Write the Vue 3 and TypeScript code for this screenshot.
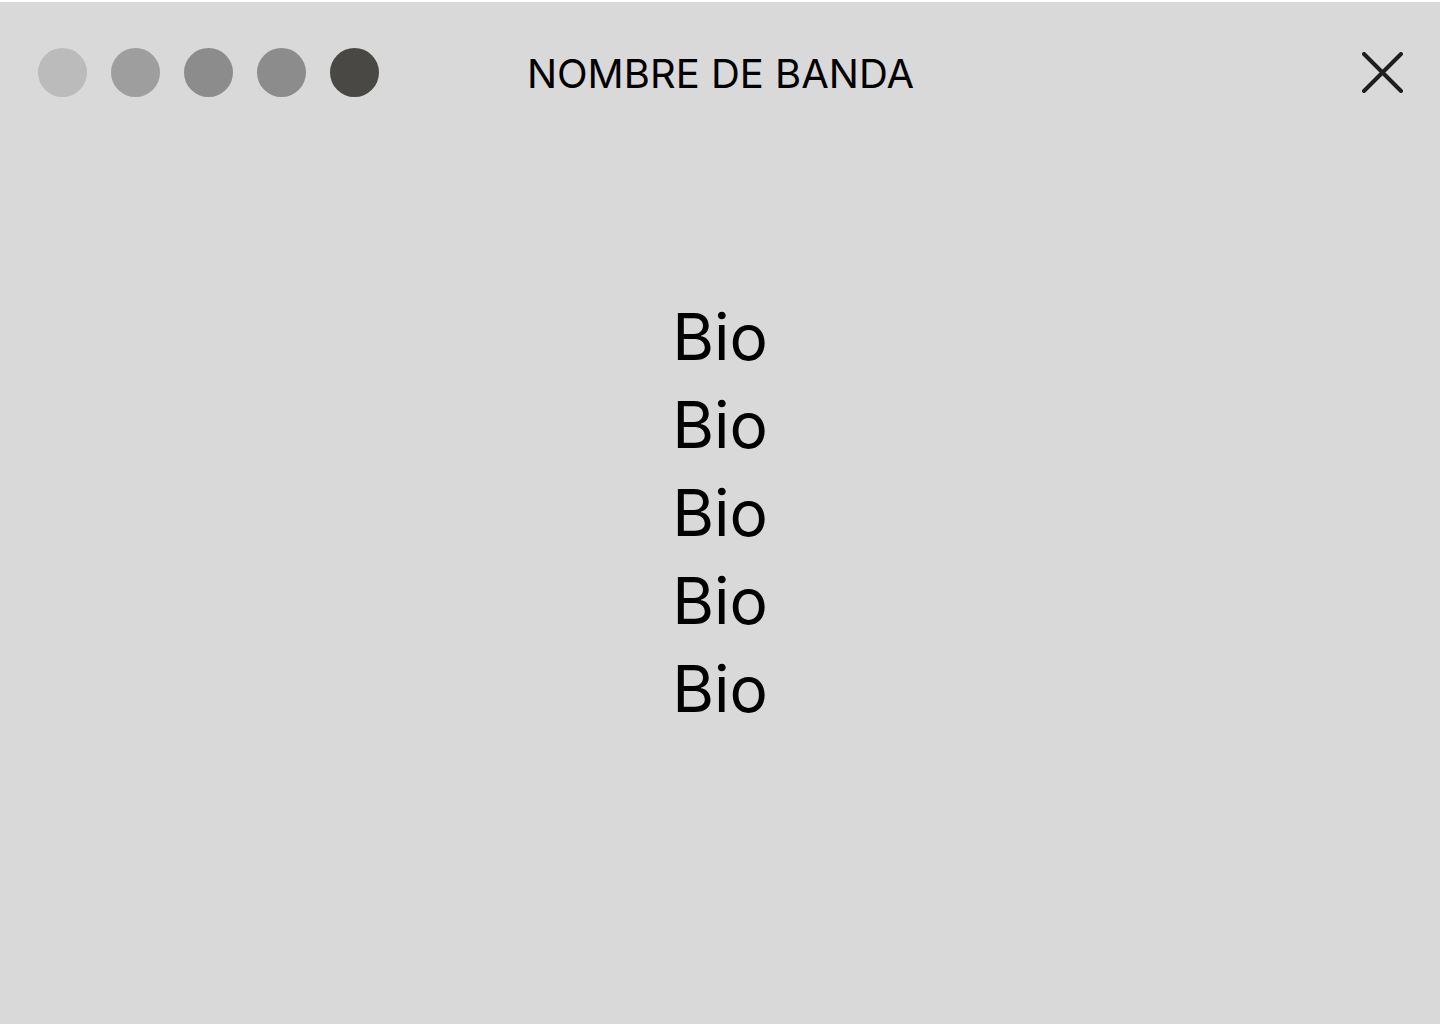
<script setup lang="ts">
interface Swatch {
  label: string
  tone: string
}

const swatches: Swatch[] = [
  { label: 'Sección 1', tone: 'tone-1' },
  { label: 'Sección 2', tone: 'tone-2' },
  { label: 'Sección 3', tone: 'tone-3' },
  { label: 'Sección 4', tone: 'tone-3' },
  { label: 'Sección 5', tone: 'tone-4' },
]

const bio: string[] = ['Bio', 'Bio', 'Bio', 'Bio', 'Bio']
</script>

<template>
  <div class="page">
    <header class="bar">
      <nav class="dots">
        <button
          v-for="swatch in swatches"
          :key="swatch.label"
          type="button"
          class="dot"
          :class="swatch.tone"
          :aria-label="swatch.label"
        ></button>
      </nav>
      <h1 class="title">NOMBRE DE BANDA</h1>
      <button type="button" class="close" aria-label="Cerrar">
        <svg viewBox="0 0 41 41" width="41" height="41" aria-hidden="true">
          <path d="M39 2 2 39M2 2l37 37" />
        </svg>
      </button>
    </header>
    <main class="bio">
      <p v-for="(line, index) in bio" :key="index" class="line">{{ line }}</p>
    </main>
  </div>
</template>

<style>
body {
  margin: 0;
  background: #ffffff;
}
</style>

<style scoped>
.page {
  box-sizing: border-box;
  min-height: 100vh;
  border-top: 2px solid #ffffff;
  background: #d9d9d9;
  color: #000000;
  font-family: Inter, sans-serif;
}

.bar {
  display: grid;
  grid-template-columns: 1fr auto 1fr;
  align-items: center;
  padding: 46px 37px 0 38px;
}

.dots {
  display: flex;
  gap: 24px;
}

.dot {
  width: 49px;
  height: 49px;
  padding: 0;
  border: 0;
  border-radius: 50%;
}

.tone-1 {
  background: #bbbbbb;
}

.tone-2 {
  background: #9e9e9e;
}

.tone-3 {
  background: #8c8c8c;
}

.tone-4 {
  background: #494845;
}

.title {
  margin: 0;
  padding-top: 2px;
  font-size: 40px;
  font-weight: 400;
  line-height: 46px;
}

.close {
  display: flex;
  justify-self: end;
  padding: 0;
  border: 0;
  background: none;
}

.close path {
  fill: none;
  stroke: #1e1e1e;
  stroke-width: 4;
  stroke-linecap: round;
  stroke-linejoin: round;
}

.bio {
  padding: 196px 24px 0;
  text-align: center;
}

.line {
  margin: 0;
  font-size: 64px;
  line-height: 88px;
}
</style>
